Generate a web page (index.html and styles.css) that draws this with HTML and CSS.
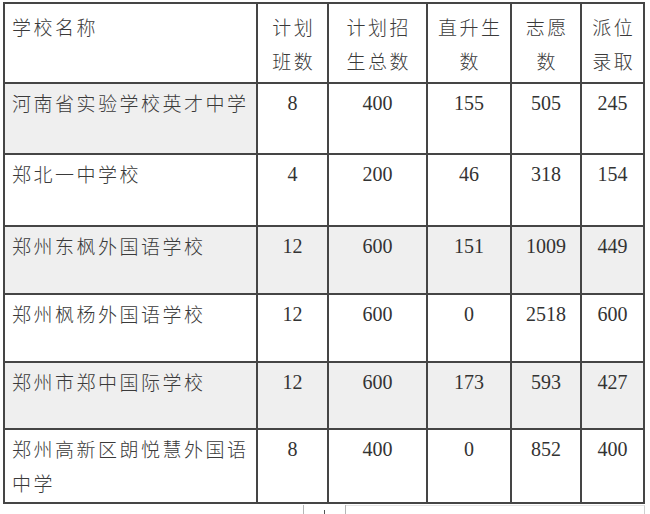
FILE: index.html
```html
<!DOCTYPE html>
<html lang="zh-CN">
<head>
<meta charset="utf-8">
<title>学校招生数据</title>
<link rel="stylesheet" href="styles.css">
</head>
<body>
<table class="data">
  <colgroup>
    <col class="c-name"><col class="c-a"><col class="c-b"><col class="c-c"><col class="c-d"><col class="c-e">
  </colgroup>
  <tr class="head">
    <td class="name">学校名称</td>
    <td class="h">计划<br>班数</td>
    <td class="h">计划招<br>生总数</td>
    <td class="h">直升生<br>数</td>
    <td class="h">志愿<br>数</td>
    <td class="h">派位<br>录取</td>
  </tr>
  <tr class="row r1">
    <td class="name shade">河南省实验学校英才中学</td>
    <td class="num">8</td><td class="num">400</td><td class="num">155</td><td class="num">505</td><td class="num">245</td>
  </tr>
  <tr class="row r2">
    <td class="name">郑北一中学校</td>
    <td class="num">4</td><td class="num">200</td><td class="num">46</td><td class="num">318</td><td class="num">154</td>
  </tr>
  <tr class="row r3 shade-row">
    <td class="name">郑州东枫外国语学校</td>
    <td class="num">12</td><td class="num">600</td><td class="num">151</td><td class="num">1009</td><td class="num">449</td>
  </tr>
  <tr class="row r4">
    <td class="name">郑州枫杨外国语学校</td>
    <td class="num">12</td><td class="num">600</td><td class="num">0</td><td class="num">2518</td><td class="num">600</td>
  </tr>
  <tr class="row r5 shade-row">
    <td class="name">郑州市郑中国际学校</td>
    <td class="num">12</td><td class="num">600</td><td class="num">173</td><td class="num">593</td><td class="num">427</td>
  </tr>
  <tr class="row r6">
    <td class="name">郑州高新区朗悦慧外国语中学</td>
    <td class="num">8</td><td class="num">400</td><td class="num">0</td><td class="num">852</td><td class="num">400</td>
  </tr>
</table>
<div class="below">
  <div class="tab"><span class="tick"></span></div>
  <div class="strip"></div>
</div>
</body>
</html>
```
FILE: styles.css
```css
html, body {
  margin: 0;
  padding: 0;
  background: #ffffff;
}
body {
  width: 650px;
  height: 514px;
  overflow: hidden;
  padding-top: 2px;
  padding-left: 3px;
  box-sizing: border-box;
}
.data {
  border-collapse: collapse;
  table-layout: fixed;
  width: 642px;
  color: #3a3a3a;
}
.c-name { width: 253px; }
.c-a { width: 71px; }
.c-b { width: 99px; }
.c-c { width: 84px; }
.c-d { width: 70px; }
.c-e { width: 63px; }
.data td {
  border: 2px solid #454545;
  vertical-align: top;
  padding: 2px 4px 0 7px;
  line-height: 34px;
  font-family: "Noto Sans CJK SC", "Noto Sans", sans-serif;
  font-weight: 300;
  font-size: 19px;
  letter-spacing: 2.5px;
  overflow: hidden;
}
.head td { height: 72px; padding-top: 6px; }
.r1 td { height: 67px; }
.r2 td { height: 68px; }
.r3 td { height: 64px; }
.r4 td { height: 64px; }
.r5 td { height: 63px; }
.r6 td { height: 70px; }
.data td.h {
  text-align: center;
  padding-left: 2.5px;
  padding-right: 0;
}
.data td.num {
  text-align: center;
  padding-left: 0;
  padding-right: 0;
  font-family: "Liberation Serif", "Times New Roman", serif;
  font-size: 20px;
  letter-spacing: 0;
  font-weight: normal;
  color: #333333;
}
.shade { background: #efefef; }
.shade-row td { background: #efefef; }
.below {
  display: flex;
  margin-top: 1px;
  margin-left: 300px;
  height: 10px;
}
.tab {
  width: 41px;
  height: 10px;
  border-left: 1px solid #b5b5b5;
  border-right: 1px solid #b5b5b5;
  position: relative;
}
.tick {
  position: absolute;
  left: 20px;
  top: 5px;
  width: 1px;
  height: 5px;
  background: #555;
}
.strip {
  width: 298px;
  height: 9px;
  border-top: 1px solid #e3e3e3;
  border-right: 1px solid #cfcfcf;
}
```
